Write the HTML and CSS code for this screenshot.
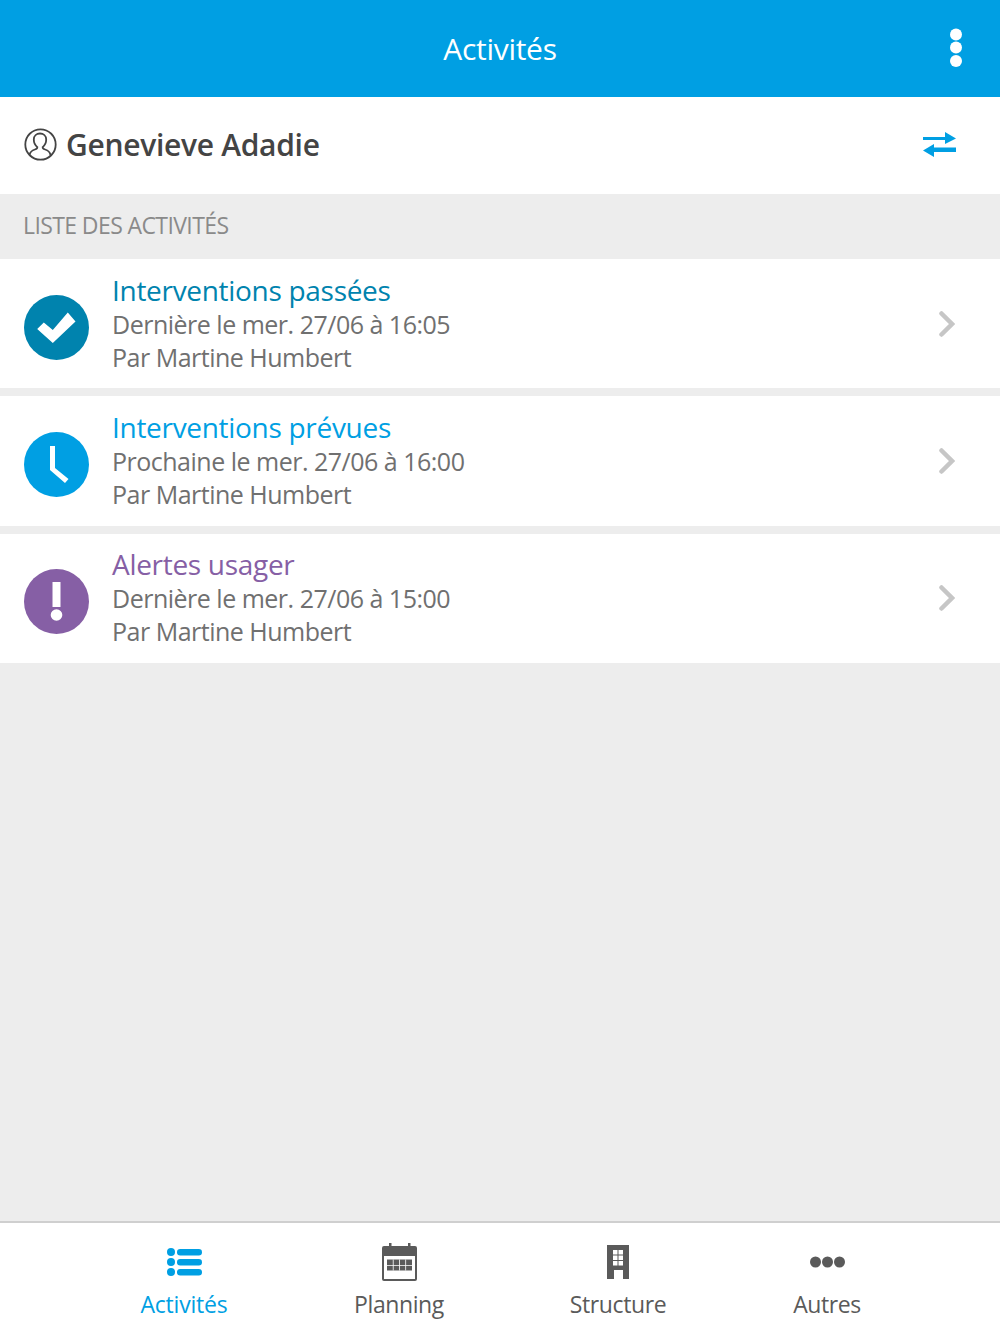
FILE: index.html
```html
<!DOCTYPE html>
<html lang="fr">
<head>
  <meta charset="UTF-8" />
  <meta name="viewport" content="width=device-width, initial-scale=1.0"/>
  <title>Activités</title>
  <link rel="stylesheet" href="styles.css">
</head>
<body>
  <header class="topbar">
    <h1>Activités</h1>
    <svg class="topbar-menu" width="14" height="40" viewBox="0 0 14 40"><circle cx="7" cy="6.500" r="6" fill="#fff"/><circle cx="7" cy="19.500" r="6" fill="#fff"/><circle cx="7" cy="33" r="6" fill="#fff"/></svg>
  </header>

  <div class="user">
    <svg class="user-icon" width="33" height="33" viewBox="0 0 33 33" fill="none" stroke="#444" stroke-width="1.800">
      <circle cx="16.500" cy="16.500" r="15.200"/>
      <path d="M5.500 27c.6-3.400 2.600-4.600 5.400-5.500 1.600-.5 2.600-1.200 2.400-2.400-2.400-2-3.500-4.800-3.500-7.600 0-3.800 2.800-6 6.200-6s6.200 2.200 6.200 6c0 2.800-1.100 5.600-3.500 7.600-.2 1.200.8 1.900 2.400 2.400 2.800.9 4.800 2.100 5.400 5.500"/>
    </svg>
    <span class="user-name">Genevieve Adadie</span>
    <svg class="user-switch" width="33" height="25" viewBox="0 0 33 25" fill="#009fe3">
      <path d="M0 5h22V0l11 6.500L22 12V8H0z"/>
      <path d="M33 15.500H11V12L0 18.500 11 25v-5h22z"/>
    </svg>
  </div>

  <div class="section-title">LISTE DES ACTIVITÉS</div>

  <main class="list">
    <div class="item">
      <svg class="item-icon" width="65" height="65" viewBox="0 0 65 65"><circle cx="32.500" cy="32.500" r="32.500" fill="#0083ae"/><path d="M13.200 34l6.600-6.600 9 7.600 15-17.600 7.700 9-22.700 21.600z" fill="#fff"/></svg>
      <div class="item-text">
        <div class="item-title title-past">Interventions passées</div>
        <div>Dernière le mer. 27/06 à 16:05</div>
        <div>Par Martine Humbert</div>
      </div>
      <svg class="chevron" width="16" height="26" viewBox="0 0 16 26" fill="none" stroke="#c6c6c6" stroke-width="4.500" stroke-linecap="round"><path d="M2.500 2.500L13 13 2.500 23.500"/></svg>
    </div>
    <div class="item">
      <svg class="item-icon" width="65" height="65" viewBox="0 0 65 65"><circle cx="32.500" cy="32.500" r="32.500" fill="#009fe3"/><path d="M26 14h5v22l13.500 11-3.500 4L26 38z" fill="#fff"/></svg>
      <div class="item-text">
        <div class="item-title title-next">Interventions prévues</div>
        <div>Prochaine le mer. 27/06 à 16:00</div>
        <div>Par Martine Humbert</div>
      </div>
      <svg class="chevron" width="16" height="26" viewBox="0 0 16 26" fill="none" stroke="#c6c6c6" stroke-width="4.500" stroke-linecap="round"><path d="M2.500 2.500L13 13 2.500 23.500"/></svg>
    </div>
    <div class="item">
      <svg class="item-icon" width="65" height="65" viewBox="0 0 65 65"><circle cx="32.500" cy="32.500" r="32.500" fill="#865fa5"/><path d="M28.500 13h8v25h-8z" fill="#fff"/><circle cx="32.500" cy="46" r="5.800" fill="#fff"/></svg>
      <div class="item-text">
        <div class="item-title title-alert">Alertes usager</div>
        <div>Dernière le mer. 27/06 à 15:00</div>
        <div>Par Martine Humbert</div>
      </div>
      <svg class="chevron" width="16" height="26" viewBox="0 0 16 26" fill="none" stroke="#c6c6c6" stroke-width="4.500" stroke-linecap="round"><path d="M2.500 2.500L13 13 2.500 23.500"/></svg>
    </div>
  </main>

  <nav class="tabs">
    <div class="tab tab-activites active">
      <svg width="35" height="30" viewBox="0 0 35 30" fill="#009fe3"><circle cx="4" cy="5" r="4"/><circle cx="4" cy="15" r="4"/><circle cx="4" cy="25" r="4"/><rect x="10" y="2" width="25" height="6.500" rx="3.200"/><rect x="10" y="12" width="25" height="6.500" rx="3.200"/><rect x="10" y="22" width="25" height="6.500" rx="3.200"/></svg>
      <span>Activités</span>
    </div>
    <div class="tab tab-planning">
      <svg width="35" height="38" viewBox="0 0 35 38" fill="#5a5a5a"><path d="M7 0h2.500v3H26V0h2.500v3H33a2 2 0 0 1 2 2v31a2 2 0 0 1-2 2H2a2 2 0 0 1-2-2V5a2 2 0 0 1 2-2h5zM2 13v23h31V13z" fill-rule="evenodd"/><path d="M5 16.500h25v11H5z"/><path d="M5 22h25v.8H5zM10.800 16.500h.8v11h-.8zM17 16.500h.8v11H17zM23.300 16.500h.8v11h-.8z" fill="#fff"/></svg>
      <span>Planning</span>
    </div>
    <div class="tab tab-structure">
      <svg width="22" height="34" viewBox="0 0 22 34"><path d="M0 0h22v34h-6V25H7v9H0z" fill="#5a5a5a"/><path d="M6 5h4.500v4.500H6zM11.500 5H16v4.500h-4.500zM6 10.500h4.500V15H6zM11.500 10.500H16V15h-4.500zM6 16h4.500v4.500H6zM11.500 16H16v4.500h-4.500z" fill="#fff"/></svg>
      <span>Structure</span>
    </div>
    <div class="tab tab-autres">
      <svg width="35" height="12" viewBox="0 0 35 12" fill="#5a5a5a"><circle cx="5.500" cy="6" r="5.500"/><circle cx="17.500" cy="6" r="5.500"/><circle cx="29.500" cy="6" r="5.500"/></svg>
      <span>Autres</span>
    </div>
  </nav>
</body>
</html>
```

FILE: styles.css
```css
* {
  box-sizing: border-box;
}

body {
  margin: 0;
  height: 1334px;
  display: flex;
  flex-direction: column;
  background-color: #ededed;
  color: #707070;
  font-family: "Open Sans", "Lato", sans-serif;
}

.topbar {
  height: 97px;
  flex: none;
  display: flex;
  align-items: center;
  justify-content: center;
  background-color: #009fe3;
  position: relative;
}

.topbar h1 {
  margin: 0;
  font-size: 30px;
  font-weight: 400;
  letter-spacing: -0.3px;
  color: #fff;
}

.topbar-menu {
  position: absolute;
  right: 37px;
  top: 28px;
}

.user {
  height: 97px;
  flex: none;
  display: flex;
  align-items: center;
  padding: 0 44px 3px 24px;
  background-color: #fff;
}

.user-icon {
  margin-right: 9px;
}

.user-name {
  flex: 1;
  font-size: 30px;
  font-weight: 600;
  letter-spacing: -0.3px;
  color: #444;
}

.section-title {
  height: 65px;
  flex: none;
  display: flex;
  align-items: center;
  padding: 0 0 3px 23px;
  font-size: 23px;
  letter-spacing: -0.6px;
  color: #8a8a8a;
}

.list {
  flex: 1;
  display: flex;
  flex-direction: column;
  gap: 8px;
}

.item {
  height: 129.400px;
  display: flex;
  align-items: center;
  padding: 0 45px 0 24px;
  background-color: #fff;
  font-size: 25px;
  line-height: 33px;
  letter-spacing: -0.5px;
}

.item-icon {
  margin-right: 23px;
  margin-top: 7px;
  flex: none;
}

.item-text {
  flex: 1;
  margin-top: -1px;
}

.item-title {
  font-size: 28px;
  line-height: 35px;
  letter-spacing: -0.3px;
}

.title-past {
  color: #0083ae;
}

.title-next {
  color: #009fe3;
}

.title-alert {
  color: #865fa5;
}

.tabs {
  height: 113px;
  flex: none;
  position: relative;
  background-color: #fff;
  border-top: 2px solid #cfcfcf;
  font-size: 23px;
  letter-spacing: -0.4px;
  color: #5a5a5a;
}

.tab {
  position: absolute;
  top: -1px;
  width: 160px;
  height: 111px;
  display: flex;
  flex-direction: column;
  align-items: center;
}

.tab svg {
  height: 40px;
  margin-top: 20px;
}

.tab span {
  margin-top: 6px;
}

.tab.active {
  color: #009fe3;
  letter-spacing: -0.2px;
}

.tab-activites {
  left: 104px;
}

.tab-planning {
  left: 319px;
}

.tab-structure {
  left: 538px;
}

.tab-autres {
  left: 747px;
}
```
